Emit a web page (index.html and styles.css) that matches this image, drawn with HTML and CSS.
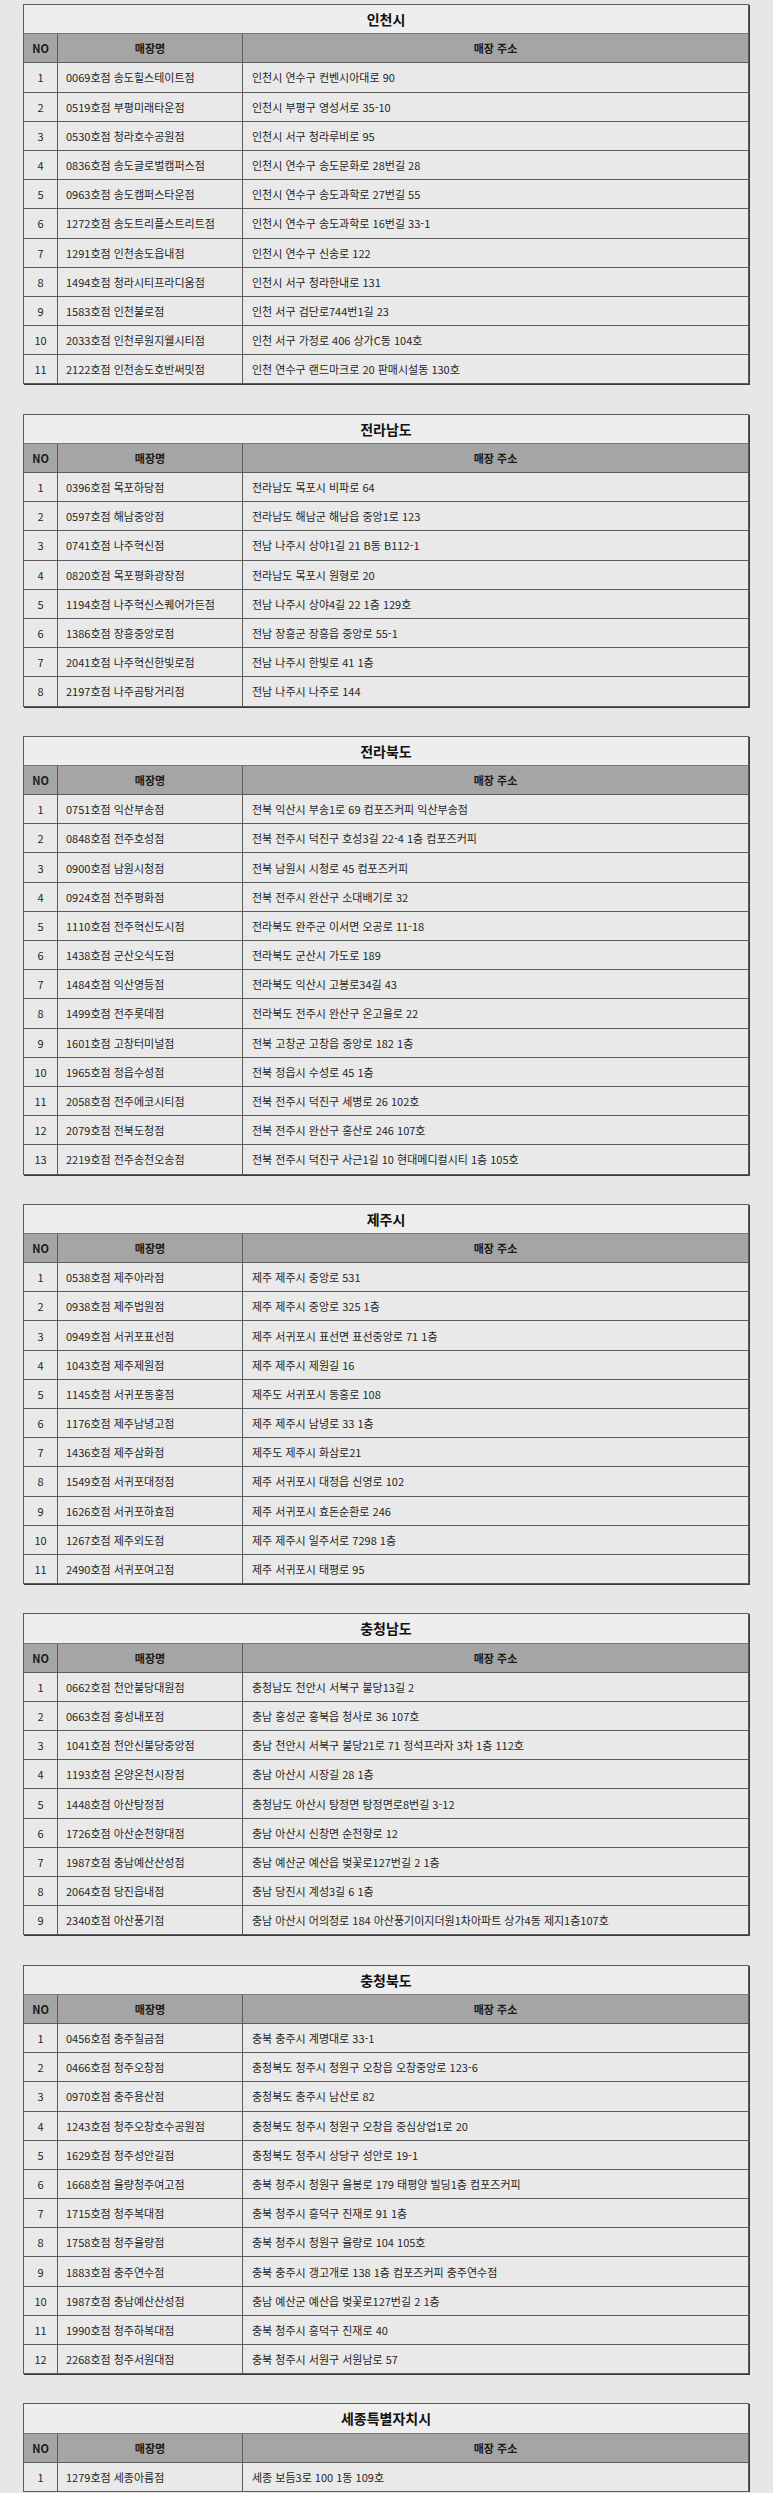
FILE: index.html
```html
<!DOCTYPE html>
<html lang="ko">
<head>
<meta charset="utf-8">
<title>매장 목록</title>
<link rel="stylesheet" href="styles.css">
</head>
<body>
<main class="page">

<table class="store-table">
<colgroup><col class="c-no"><col class="c-name"><col class="c-addr"></colgroup>
<thead>
<tr class="title-row"><th colspan="3">인천시</th></tr>
<tr class="head-row"><th>NO</th><th>매장명</th><th>매장 주소</th></tr>
</thead>
<tbody>
<tr><td>1</td><td>0069호점 송도힐스테이트점</td><td>인천시 연수구 컨벤시아대로 90</td></tr>
<tr><td>2</td><td>0519호점 부평미래타운점</td><td>인천시 부평구 영성서로 35-10</td></tr>
<tr><td>3</td><td>0530호점 청라호수공원점</td><td>인천시 서구 청라루비로 95</td></tr>
<tr><td>4</td><td>0836호점 송도글로벌캠퍼스점</td><td>인천시 연수구 송도문화로 28번길 28</td></tr>
<tr><td>5</td><td>0963호점 송도캠퍼스타운점</td><td>인천시 연수구 송도과학로 27번길 55</td></tr>
<tr><td>6</td><td>1272호점 송도트리플스트리트점</td><td>인천시 연수구 송도과학로 16번길 33-1</td></tr>
<tr><td>7</td><td>1291호점 인천송도읍내점</td><td>인천시 연수구 신송로 122</td></tr>
<tr><td>8</td><td>1494호점 청라시티프라디움점</td><td>인천시 서구 청라한내로 131</td></tr>
<tr><td>9</td><td>1583호점 인천불로점</td><td>인천 서구 검단로744번1길 23</td></tr>
<tr><td>10</td><td>2033호점 인천루원지웰시티점</td><td>인천 서구 가정로 406 상가C동 104호</td></tr>
<tr><td>11</td><td>2122호점 인천송도호반써밋점</td><td>인천 연수구 랜드마크로 20 판매시설동 130호</td></tr>
</tbody>
</table>

<table class="store-table">
<colgroup><col class="c-no"><col class="c-name"><col class="c-addr"></colgroup>
<thead>
<tr class="title-row"><th colspan="3">전라남도</th></tr>
<tr class="head-row"><th>NO</th><th>매장명</th><th>매장 주소</th></tr>
</thead>
<tbody>
<tr><td>1</td><td>0396호점 목포하당점</td><td>전라남도 목포시 비파로 64</td></tr>
<tr><td>2</td><td>0597호점 해남중앙점</td><td>전라남도 해남군 해남읍 중앙1로 123</td></tr>
<tr><td>3</td><td>0741호점 나주혁신점</td><td>전남 나주시 상야1길 21 B동 B112-1</td></tr>
<tr><td>4</td><td>0820호점 목포평화광장점</td><td>전라남도 목포시 원형로 20</td></tr>
<tr><td>5</td><td>1194호점 나주혁신스퀘어가든점</td><td>전남 나주시 상야4길 22 1층 129호</td></tr>
<tr><td>6</td><td>1386호점 장흥중앙로점</td><td>전남 장흥군 장흥읍 중앙로 55-1</td></tr>
<tr><td>7</td><td>2041호점 나주혁신한빛로점</td><td>전남 나주시 한빛로 41 1층</td></tr>
<tr><td>8</td><td>2197호점 나주곰탕거리점</td><td>전남 나주시 나주로 144</td></tr>
</tbody>
</table>

<table class="store-table">
<colgroup><col class="c-no"><col class="c-name"><col class="c-addr"></colgroup>
<thead>
<tr class="title-row"><th colspan="3">전라북도</th></tr>
<tr class="head-row"><th>NO</th><th>매장명</th><th>매장 주소</th></tr>
</thead>
<tbody>
<tr><td>1</td><td>0751호점 익산부송점</td><td>전북 익산시 부송1로 69 컴포즈커피 익산부송점</td></tr>
<tr><td>2</td><td>0848호점 전주호성점</td><td>전북 전주시 덕진구 호성3길 22-4 1층 컴포즈커피</td></tr>
<tr><td>3</td><td>0900호점 남원시청점</td><td>전북 남원시 시청로 45 컴포즈커피</td></tr>
<tr><td>4</td><td>0924호점 전주평화점</td><td>전북 전주시 완산구 소대배기로 32</td></tr>
<tr><td>5</td><td>1110호점 전주혁신도시점</td><td>전라북도 완주군 이서면 오공로 11-18</td></tr>
<tr><td>6</td><td>1438호점 군산오식도점</td><td>전라북도 군산시 가도로 189</td></tr>
<tr><td>7</td><td>1484호점 익산영등점</td><td>전라북도 익산시 고봉로34길 43</td></tr>
<tr><td>8</td><td>1499호점 전주롯데점</td><td>전라북도 전주시 완산구 온고을로 22</td></tr>
<tr><td>9</td><td>1601호점 고창터미널점</td><td>전북 고창군 고창읍 중앙로 182 1층</td></tr>
<tr><td>10</td><td>1965호점 정읍수성점</td><td>전북 정읍시 수성로 45 1층</td></tr>
<tr><td>11</td><td>2058호점 전주에코시티점</td><td>전북 전주시 덕진구 세병로 26 102호</td></tr>
<tr><td>12</td><td>2079호점 전북도청점</td><td>전북 전주시 완산구 홍산로 246 107호</td></tr>
<tr><td>13</td><td>2219호점 전주송천오송점</td><td>전북 전주시 덕진구 사근1길 10 현대메디컬시티 1층 105호</td></tr>
</tbody>
</table>

<table class="store-table">
<colgroup><col class="c-no"><col class="c-name"><col class="c-addr"></colgroup>
<thead>
<tr class="title-row"><th colspan="3">제주시</th></tr>
<tr class="head-row"><th>NO</th><th>매장명</th><th>매장 주소</th></tr>
</thead>
<tbody>
<tr><td>1</td><td>0538호점 제주아라점</td><td>제주 제주시 중앙로 531</td></tr>
<tr><td>2</td><td>0938호점 제주법원점</td><td>제주 제주시 중앙로 325 1층</td></tr>
<tr><td>3</td><td>0949호점 서귀포표선점</td><td>제주 서귀포시 표선면 표선중앙로 71 1층</td></tr>
<tr><td>4</td><td>1043호점 제주제원점</td><td>제주 제주시 제원길 16</td></tr>
<tr><td>5</td><td>1145호점 서귀포동홍점</td><td>제주도 서귀포시 동홍로 108</td></tr>
<tr><td>6</td><td>1176호점 제주남녕고점</td><td>제주 제주시 남녕로 33 1층</td></tr>
<tr><td>7</td><td>1436호점 제주삼화점</td><td>제주도 제주시 화삼로21</td></tr>
<tr><td>8</td><td>1549호점 서귀포대정점</td><td>제주 서귀포시 대정읍 신영로 102</td></tr>
<tr><td>9</td><td>1626호점 서귀포하효점</td><td>제주 서귀포시 효돈순환로 246</td></tr>
<tr><td>10</td><td>1267호점 제주외도점</td><td>제주 제주시 일주서로 7298 1층</td></tr>
<tr><td>11</td><td>2490호점 서귀포여고점</td><td>제주 서귀포시 태평로 95</td></tr>
</tbody>
</table>

<table class="store-table">
<colgroup><col class="c-no"><col class="c-name"><col class="c-addr"></colgroup>
<thead>
<tr class="title-row"><th colspan="3">충청남도</th></tr>
<tr class="head-row"><th>NO</th><th>매장명</th><th>매장 주소</th></tr>
</thead>
<tbody>
<tr><td>1</td><td>0662호점 천안불당대원점</td><td>충청남도 천안시 서북구 불당13길 2</td></tr>
<tr><td>2</td><td>0663호점 홍성내포점</td><td>충남 홍성군 홍북읍 청사로 36 107호</td></tr>
<tr><td>3</td><td>1041호점 천안신불당중앙점</td><td>충남 천안시 서북구 불당21로 71 정석프라자 3차 1층 112호</td></tr>
<tr><td>4</td><td>1193호점 온양온천시장점</td><td>충남 아산시 시장길 28 1층</td></tr>
<tr><td>5</td><td>1448호점 아산탕정점</td><td>충청남도 아산시 탕정면 탕정면로8번길 3-12</td></tr>
<tr><td>6</td><td>1726호점 아산순천향대점</td><td>충남 아산시 신창면 순천향로 12</td></tr>
<tr><td>7</td><td>1987호점 충남예산산성점</td><td>충남 예산군 예산읍 벚꽃로127번길 2 1층</td></tr>
<tr><td>8</td><td>2064호점 당진읍내점</td><td>충남 당진시 계성3길 6 1층</td></tr>
<tr><td>9</td><td>2340호점 아산풍기점</td><td>충남 아산시 어의정로 184 아산풍기이지더원1차아파트 상가4동 제지1층107호</td></tr>
</tbody>
</table>

<table class="store-table">
<colgroup><col class="c-no"><col class="c-name"><col class="c-addr"></colgroup>
<thead>
<tr class="title-row"><th colspan="3">충청북도</th></tr>
<tr class="head-row"><th>NO</th><th>매장명</th><th>매장 주소</th></tr>
</thead>
<tbody>
<tr><td>1</td><td>0456호점 충주칠금점</td><td>충북 충주시 계명대로 33-1</td></tr>
<tr><td>2</td><td>0466호점 청주오창점</td><td>충청북도 청주시 청원구 오창읍 오창중앙로 123-6</td></tr>
<tr><td>3</td><td>0970호점 충주용산점</td><td>충청북도 충주시 남산로 82</td></tr>
<tr><td>4</td><td>1243호점 청주오창호수공원점</td><td>충청북도 청주시 청원구 오창읍 중심상업1로 20</td></tr>
<tr><td>5</td><td>1629호점 청주성안길점</td><td>충청북도 청주시 상당구 성안로 19-1</td></tr>
<tr><td>6</td><td>1668호점 율량청주여고점</td><td>충북 청주시 청원구 율봉로 179 태평양 빌딩1층 컴포즈커피</td></tr>
<tr><td>7</td><td>1715호점 청주복대점</td><td>충북 청주시 흥덕구 진재로 91 1층</td></tr>
<tr><td>8</td><td>1758호점 청주율량점</td><td>충북 청주시 청원구 율량로 104 105호</td></tr>
<tr><td>9</td><td>1883호점 충주연수점</td><td>충북 충주시 갱고개로 138 1층 컴포즈커피 충주연수점</td></tr>
<tr><td>10</td><td>1987호점 충남예산산성점</td><td>충남 예산군 예산읍 벚꽃로127번길 2 1층</td></tr>
<tr><td>11</td><td>1990호점 청주하복대점</td><td>충북 청주시 흥덕구 진재로 40</td></tr>
<tr><td>12</td><td>2268호점 청주서원대점</td><td>충북 청주시 서원구 서원남로 57</td></tr>
</tbody>
</table>

<table class="store-table">
<colgroup><col class="c-no"><col class="c-name"><col class="c-addr"></colgroup>
<thead>
<tr class="title-row"><th colspan="3">세종특별자치시</th></tr>
<tr class="head-row"><th>NO</th><th>매장명</th><th>매장 주소</th></tr>
</thead>
<tbody>
<tr><td>1</td><td>1279호점 세종아름점</td><td>세종 보듬3로 100 1동 109호</td></tr>
</tbody>
</table>

</main>
</body>
</html>
```

FILE: styles.css
```css
html, body {
  margin: 0;
  padding: 0;
  background: #e7e7e7;
}

body {
  font-family: "Noto Sans CJK KR", "Noto Sans", sans-serif;
  color: #2a2a2a;
}

.page {
  padding: 4px 0 0 23px;
  display: flex;
  flex-direction: column;
  gap: 29.2px;
}

.store-table {
  width: 726px;
  table-layout: fixed;
  border-collapse: collapse;
  border: 1px solid #2f2f2f;
  box-shadow: 1px 1px 0 #3a3a3a;
  background: #e9e9e9;
}

.c-no { width: 34px; }
.c-name { width: 185px; }

.store-table tr {
  height: 29.2px;
}

.store-table th,
.store-table td {
  border: 1px solid #5c5c5c;
  padding: 0;
  vertical-align: middle;
  white-space: nowrap;
  overflow: hidden;
}

.title-row th {
  background: #eeeeee;
  color: #111111;
  font-size: 14px;
  font-weight: 700;
  text-align: center;
  border-bottom-color: #7a7a7a;
}

.head-row th {
  background: #a5a5a5;
  color: #1a1a1a;
  font-size: 11px;
  font-weight: 700;
  text-align: center;
}

.store-table td {
  font-size: 11px;
  color: #262626;
  text-align: left;
  padding-left: 8px;
}

.store-table td:first-child {
  text-align: center;
  padding-left: 0;
}

.store-table td:last-child {
  padding-left: 9px;
}
```
